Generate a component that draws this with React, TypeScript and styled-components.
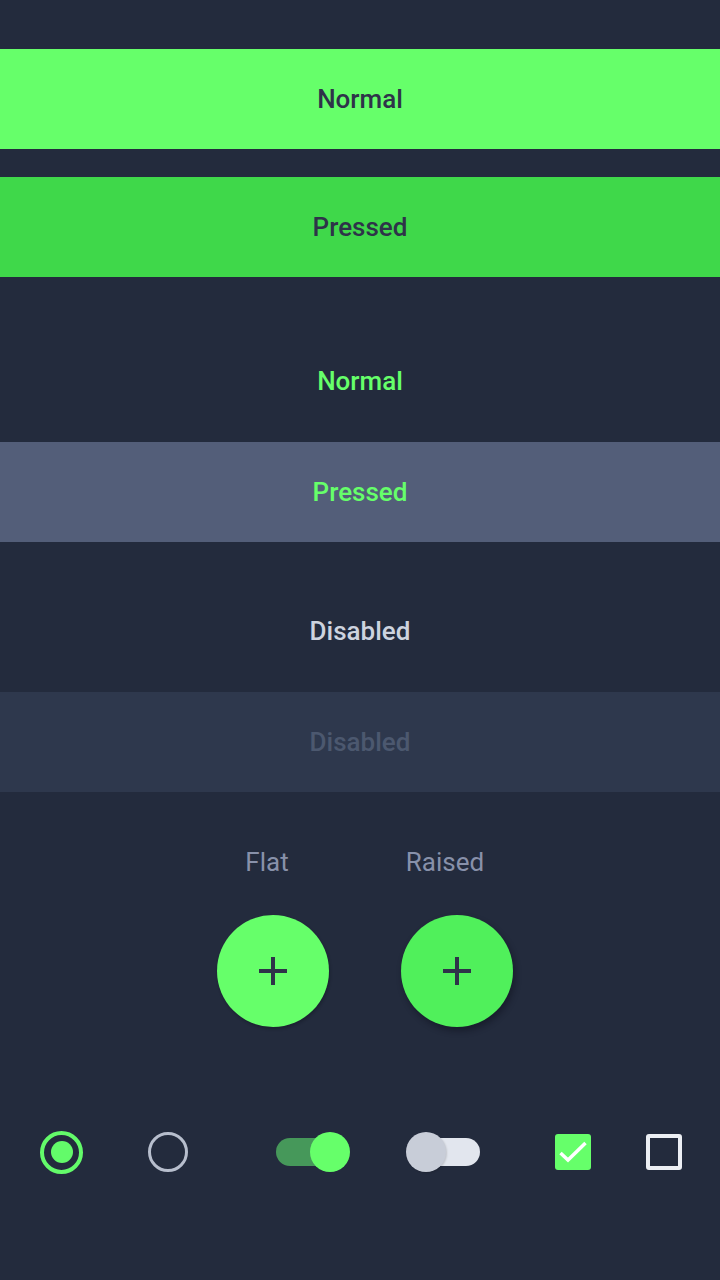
import React from "react";
import styled, { createGlobalStyle } from "styled-components";

const Global = createGlobalStyle`
  html, body { margin: 0; padding: 0; background: #232b3d; }
  * { box-sizing: border-box; }
`;

const Page = styled.div`
  width: 720px;
  min-height: 1280px;
  background: #232b3d;
  padding-top: 49px;
  display: flex;
  flex-direction: column;
  font-family: Roboto, "Noto Sans", sans-serif;
`;

const Button = styled.div<{ $bg: string; $fg: string; $mt: number }>`
  height: 100px;
  margin-top: ${(p) => p.$mt}px;
  background: ${(p) => p.$bg};
  color: ${(p) => p.$fg};
  display: flex;
  align-items: center;
  justify-content: center;
  font-size: 26px;
  font-weight: 500;
`;

const FabSection = styled.div`
  margin-top: 55px;
  display: grid;
  grid-template-columns: 112px 112px;
  column-gap: 72px;
  justify-content: center;
  margin-left: 10px;
  row-gap: 38px;
`;

const FabLabel = styled.div<{ $shift: number }>`
  font-size: 26px;
  font-weight: 400;
  color: #8891aa;
  text-align: center;
  line-height: 30px;
  transform: translateX(${(p) => p.$shift}px);
`;

const Fab = styled.div<{ $raised?: boolean }>`
  width: 112px;
  height: 112px;
  border-radius: 50%;
  background: ${(p) => (p.$raised ? "#50f05b" : "#66ff6a")};
  box-shadow: ${(p) =>
    p.$raised
      ? "2px 4px 6px rgba(10, 14, 24, 0.45)"
      : "1px 2px 3px rgba(10, 14, 24, 0.3)"};
  display: flex;
  align-items: center;
  justify-content: center;
`;

const Controls = styled.div`
  margin-top: 103px;
  display: flex;
  align-items: center;
  height: 44px;
  padding-left: 40px;
`;

const Slot = styled.div<{ $ml: number }>`
  margin-left: ${(p) => p.$ml}px;
  display: flex;
  align-items: center;
`;

const Radio = styled.div<{ $on?: boolean }>`
  width: ${(p) => (p.$on ? 43 : 40)}px;
  height: ${(p) => (p.$on ? 43 : 40)}px;
  border-radius: 50%;
  border: ${(p) => (p.$on ? "4px solid #63fb6a" : "3.5px solid #b7becd")};
  display: flex;
  align-items: center;
  justify-content: center;
`;

const RadioDot = styled.div`
  width: 22px;
  height: 22px;
  border-radius: 50%;
  background: #63fb6a;
`;

const Switch = styled.div<{ $on?: boolean }>`
  width: 74px;
  height: 40px;
  position: relative;
  display: flex;
  align-items: center;
  justify-content: ${(p) => (p.$on ? "flex-start" : "flex-end")};
`;

const Track = styled.div<{ $on?: boolean }>`
  width: 70px;
  height: 28px;
  border-radius: 14px;
  background: ${(p) => (p.$on ? "#46985a" : "#e2e6ee")};
`;

const Thumb = styled.div<{ $on?: boolean }>`
  position: absolute;
  top: 0;
  ${(p) => (p.$on ? "right: 0;" : "left: 0;")}
  width: 40px;
  height: 40px;
  border-radius: 50%;
  background: ${(p) => (p.$on ? "#66ff6a" : "#c8cdd8")};
  box-shadow: ${(p) => (p.$on ? "none" : "1px 1px 2px rgba(0,0,0,0.15)")};
`;

const Check = styled.div<{ $on?: boolean }>`
  width: 36px;
  height: 36px;
  border-radius: 3px;
  background: ${(p) => (p.$on ? "#66ff6a" : "transparent")};
  border: ${(p) => (p.$on ? "none" : "4px solid #eceff4")};
  display: flex;
  align-items: center;
  justify-content: center;
`;

const Plus = () => (
  <svg width="32" height="32" viewBox="0 0 32 32">
    <rect x="2" y="14" width="28" height="4" fill="#2e3349" />
    <rect x="14" y="2" width="4" height="28" fill="#2e3349" />
  </svg>
);

export default function App() {
  return (
    <>
      <Global />
      <Page>
        <Button $bg="#66ff6a" $fg="#2e3349" $mt={0}>Normal</Button>
        <Button $bg="#3fd84a" $fg="#2e3349" $mt={28}>Pressed</Button>
        <Button $bg="transparent" $fg="#66ff6a" $mt={54}>Normal</Button>
        <Button $bg="#535e79" $fg="#66ff6a" $mt={11}>Pressed</Button>
        <Button $bg="transparent" $fg="#cdd3df" $mt={39}>Disabled</Button>
        <Button $bg="#2e384d" $fg="#4c586f" $mt={11}>Disabled</Button>
        <FabSection>
          <FabLabel $shift={-6}>Flat</FabLabel>
          <FabLabel $shift={-12}>Raised</FabLabel>
          <Fab><Plus /></Fab>
          <Fab $raised><Plus /></Fab>
        </FabSection>
        <Controls>
          <Slot $ml={0}>
            <Radio $on><RadioDot /></Radio>
          </Slot>
          <Slot $ml={65}>
            <Radio />
          </Slot>
          <Slot $ml={88}>
            <Switch $on>
              <Track $on />
              <Thumb $on />
            </Switch>
          </Slot>
          <Slot $ml={56}>
            <Switch>
              <Track />
              <Thumb />
            </Switch>
          </Slot>
          <Slot $ml={75}>
            <Check $on>
              <svg width="36" height="36" viewBox="0 0 36 36">
                <path d="M5.5 19 L13 26 L30.5 9" fill="none" stroke="#ffffff" strokeWidth="3.5" />
              </svg>
            </Check>
          </Slot>
          <Slot $ml={55}>
            <Check />
          </Slot>
        </Controls>
      </Page>
    </>
  );
}
